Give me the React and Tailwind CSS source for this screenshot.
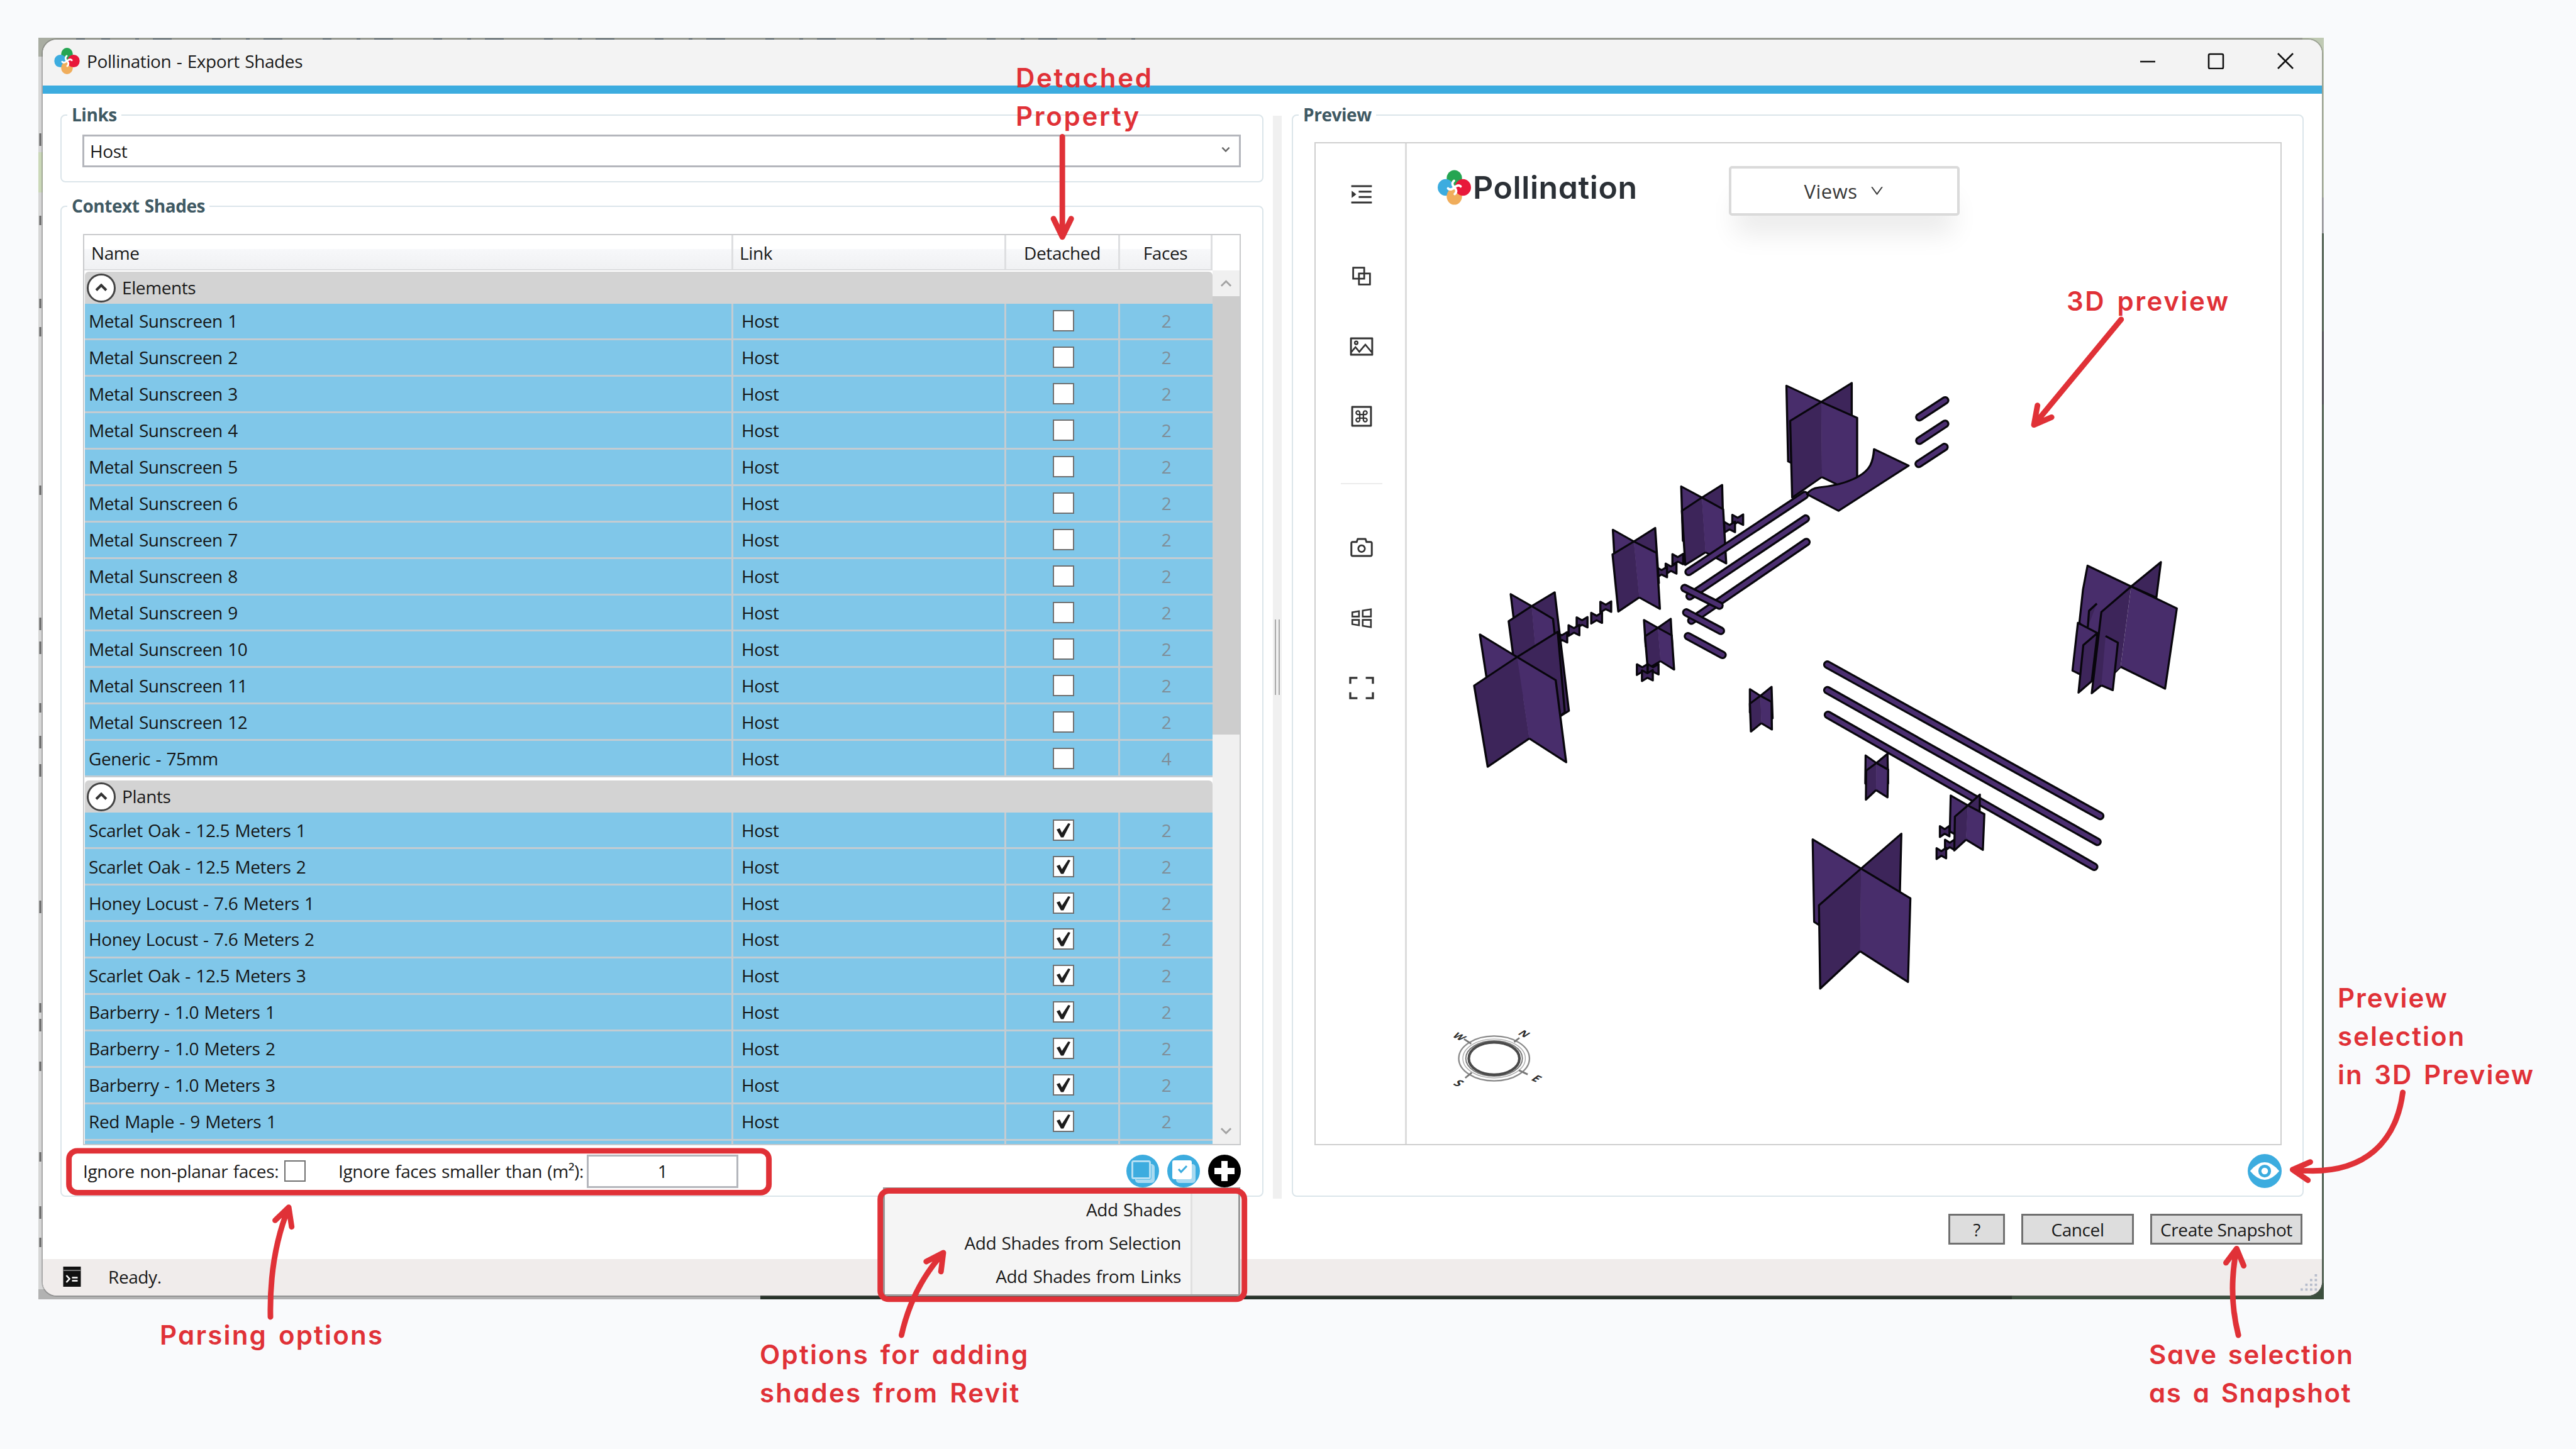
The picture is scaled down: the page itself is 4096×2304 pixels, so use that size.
import React from "react";
import {
  AiOutlineMenuUnfold,
  AiOutlineBlock,
  AiOutlinePicture,
  AiOutlineMacCommand,
  AiOutlineCamera,
  AiOutlineWindows,
  AiOutlineDown,
} from "react-icons/ai";

const elements = [
  ...Array.from({ length: 12 }, (_, i) => ({ name: `Metal Sunscreen ${i + 1}`, faces: 2 })),
  { name: "Generic - 75mm", faces: 4 },
];

const plants = [
  "Scarlet Oak - 12.5 Meters 1",
  "Scarlet Oak - 12.5 Meters 2",
  "Honey Locust - 7.6 Meters 1",
  "Honey Locust - 7.6 Meters 2",
  "Scarlet Oak - 12.5 Meters 3",
  "Barberry - 1.0 Meters 1",
  "Barberry - 1.0 Meters 2",
  "Barberry - 1.0 Meters 3",
  "Red Maple - 9 Meters 1",
].map((name) => ({ name, faces: 2, detached: true }));

function Chevron({ className, dir = "down", stroke = 2.4 }) {
  return (
    <svg viewBox="0 0 20 12" className={className} fill="none" stroke="currentColor" strokeWidth={stroke}>
      <path d={dir === "down" ? "M2 2 10 10 18 2" : "M2 10 10 2 18 10"} />
    </svg>
  );
}

function Logo({ className }) {
  return (
    <svg viewBox="0 0 100 104" className={className}>
      <ellipse cx="50" cy="25" rx="23" ry="25" fill="#25a552" />
      <ellipse cx="24" cy="52" rx="24" ry="25" fill="#3cacdf" />
      <ellipse cx="50" cy="79" rx="23" ry="25" fill="#f0ad5b" />
      <ellipse cx="76" cy="52" rx="24" ry="25" fill="#e8183a" />
      <path
        d="M50 52C43 45 42 38 49 32M50 52C58 45 64 44 69 49M50 52C57 59 58 66 51 72M50 52C42 59 36 60 31 55"
        fill="none"
        stroke="#fff"
        strokeWidth="7"
        strokeLinecap="round"
      />
    </svg>
  );
}

function GroupBox({ title, className, children }) {
  return (
    <section className={`relative rounded-[8px] border-2 border-[#dbe5ea] ${className}`}>
      <h2 className="absolute left-[9px] top-[-21px] bg-white px-[7px] text-[28px] font-bold leading-[38px] tracking-[-0.45px] text-[#3f5963]">
        {title}
      </h2>
      {children}
    </section>
  );
}

function CheckBox({ checked }) {
  return (
    <span className="flex h-[34px] w-[34px] shrink-0 items-center justify-center border-2 border-[#707070] bg-white">
      {checked && (
        <svg viewBox="0 0 30 30" className="h-[30px] w-[30px]">
          <path d="M4 14 9 12 12.5 19 22.5 4 26 5 15 26.5 11 26.5Z" fill="#1d1d1d" />
        </svg>
      )}
    </span>
  );
}

function GroupRow({ title }) {
  return (
    <div className="flex h-[51px] shrink-0 items-center rounded-t-[6px] bg-[#d3d3d3] pl-[3px]">
      <span className="flex h-[46px] w-[46px] items-center justify-center rounded-full border-[3px] border-[#444] bg-white text-[#333]">
        <Chevron dir="up" className="h-[13px] w-[20px]" stroke={4} />
      </span>
      <span className="pb-px pl-[10px]">{title}</span>
    </div>
  );
}

const columns = "grid grid-cols-[1031px_434px_181px_147px]";

function Row({ name, faces, detached }) {
  return (
    <div className={`${columns} h-[57.95px] shrink-0 border-b-[3px] border-[#c3ccd2] bg-[#80c7e9] text-[#161616]`}>
      <div className="flex items-center border-r-[3px] border-[#c3ccd2] pl-[6px]">{name}</div>
      <div className="flex items-center border-r-[3px] border-[#c3ccd2] pl-[13px]">Host</div>
      <div className="flex items-center justify-center border-r-[3px] border-[#c3ccd2] pl-[4px]">
        <CheckBox checked={detached} />
      </div>
      <div className="flex items-center justify-center text-[#7f8e98]">{faces}</div>
    </div>
  );
}

function HeaderCell({ className, children }) {
  return <div className={`flex items-center border-r-[3px] border-[#dedfe1] pt-[2px] ${className}`}>{children}</div>;
}

function ShadeTable() {
  return (
    <div className="flex h-[1449px] w-[1841px] flex-col border-2 border-[#c9cacc]">
      <div className="flex h-[56px] shrink-0">
        <div className="grid grid-cols-[1032px_434px_181px_147px] border-b-2 border-[#dcdddf] bg-linear-to-b from-white from-40% via-[#f7f8fa] via-41% to-[#f0f1f3]">
          <HeaderCell className="pl-[11px]">Name</HeaderCell>
          <HeaderCell className="pl-[10px]">Link</HeaderCell>
          <HeaderCell className="justify-center">Detached</HeaderCell>
          <HeaderCell className="justify-center">Faces</HeaderCell>
        </div>
      </div>
      <div className="flex min-h-0 grow">
        <div className="ml-px flex w-[1793px] flex-col overflow-hidden pt-[2px]">
          <GroupRow title="Elements" />
          {elements.map((e) => (
            <Row key={e.name} {...e} />
          ))}
          <div className="h-[5px] shrink-0" />
          <GroupRow title="Plants" />
          {plants.map((e) => (
            <Row key={e.name} {...e} />
          ))}
          <div className={`${columns} h-[10px] shrink-0 bg-[#80c7e9]`}>
            <div className="border-r-[3px] border-[#c3ccd2]" />
            <div className="border-r-[3px] border-[#c3ccd2]" />
            <div className="border-r-[3px] border-[#c3ccd2]" />
          </div>
        </div>
        <div className="flex w-[43px] flex-col items-center bg-[#f0f0f0] text-[#a3a3a3]">
          <div className="flex h-[41px] items-center justify-center">
            <Chevron dir="up" className="h-[12px] w-[19px]" stroke={3} />
          </div>
          <div className="h-[697px] w-full bg-[#cdcdcd]" />
          <Chevron className="mb-[15px] mt-auto h-[12px] w-[19px]" stroke={3} />
        </div>
      </div>
    </div>
  );
}

function RoundActions() {
  return (
    <div className="ml-auto flex gap-[13px]">
      <svg viewBox="0 0 52 52" className="h-[52px] w-[52px]">
        <circle cx="26" cy="26" r="26" fill="#3cacdf" />
        <rect x="14" y="15" width="31" height="30" rx="5" fill="#a8daf1" />
        <path d="M39 17V36Q39 39 36 39H16" fill="none" stroke="#3cacdf" strokeWidth="2" opacity=".7" />
        <rect x="9.500" y="10.500" width="28" height="27" rx="2" fill="#3cacdf" stroke="#b4dff3" strokeWidth="3" />
      </svg>
      <svg viewBox="0 0 52 52" className="h-[52px] w-[52px]">
        <circle cx="26" cy="26" r="26" fill="#3cacdf" />
        <rect x="14" y="15" width="31" height="30" rx="5" fill="#a8daf1" />
        <rect x="8" y="9" width="31" height="30" rx="3" fill="#fff" />
        <path d="M18 23 22 27.500 31 18" fill="none" stroke="#3cacdf" strokeWidth="3" />
      </svg>
      <svg viewBox="0 0 52 52" className="h-[52px] w-[52px]">
        <circle cx="26" cy="26" r="26" fill="#000" />
        <path d="M26 10V42M10 26H42" stroke="#fff" strokeWidth="10" />
      </svg>
    </div>
  );
}

function LeftPane() {
  return (
    <div className="ml-[28px] w-[1913px] pt-[33px]">
      <GroupBox title="Links" className="h-[108px]">
        <div className="ml-[33px] mt-[30px] flex h-[52px] w-[1842px] items-center justify-between border-[3px] border-[#b4b6bc] pl-[9px] pr-[14px]">
          <span>Host</span>
          <Chevron className="mb-[6px] h-[9px] w-[14px] text-[#666]" stroke={3.5} />
        </div>
      </GroupBox>
      <GroupBox title="Context Shades" className="mt-[37px] h-[1576px] pl-[34px] pt-[43px]">
        <ShadeTable />
        <div className="flex h-[82px] w-[1841px] items-center">
          <span className="w-[320px] whitespace-nowrap">Ignore non-planar faces:</span>
          <CheckBox />
          <span className="ml-[52px] w-[395px] whitespace-nowrap">Ignore faces smaller than (m²):</span>
          <div className="flex h-[53px] w-[241px] items-center justify-center border-[3px] border-[#b4b6bc]">1</div>
          <RoundActions />
        </div>
      </GroupBox>
    </div>
  );
}

const LIGHT = "#482d6b";
const DARK = "#3d255a";

/* Two vertical planes crossing at c; p = [tl, c, tr, fr, frBottom, fl, flBottom, cBottom, tlBottom, trBottom] */
function Cross({ p }) {
  const [tl, c, tr, fr, frb, fl, flb, cb, tlb, trb] = p.map((q) => q.join(" "));
  return (
    <g>
      <path d={`M${c}L${tl}L${tlb}L${cb}`} fill={LIGHT} />
      <path d={`M${c}L${tr}L${trb}L${cb}`} fill={DARK} />
      <path d={`M${c}L${fl}L${flb}L${cb}`} fill={DARK} />
      <path d={`M${c}L${fr}L${frb}L${cb}`} fill={LIGHT} />
    </g>
  );
}

function Shrub({ x, y }) {
  return (
    <path
      d={`M${x - 16} ${y - 18}L${x} ${y - 8}L${x + 16} ${y - 19}V${y + 16}L${x} ${y + 7}L${x - 16} ${y + 18}Z`}
      fill={DARK}
    />
  );
}

function Bar({ a, b }) {
  return (
    <g>
      <path d={`M${a.join(" ")}L${b.join(" ")}`} strokeLinecap="round" strokeWidth="13.500" vectorEffect="non-scaling-stroke" />
      <path d={`M${a.join(" ")}L${b.join(" ")}`} strokeLinecap="round" stroke="#4b2e70" strokeWidth="7" vectorEffect="non-scaling-stroke" />
    </g>
  );
}

const west = [
  [[286, 877], [348, 917], [416, 871], [411, 959], [440, 1250], [280, 967], [305, 1180], [380, 1320], [310, 1100], [458, 1265]],
  [[195, 1011], [305, 1086], [425, 1002], [419, 1163], [450, 1436], [178, 1181], [218, 1451], [341, 1357], [218, 1180], [446, 1270]],
  [[790, 519], [851, 556], [911, 514], [914, 595], [923, 775], [792, 600], [802, 780], [862, 738], [795, 700], [915, 690]],
  [[588, 663], [650, 702], [713, 657], [717, 740], [727, 926], [587, 745], [604, 935], [666, 888], [595, 800], [724, 840]],
  [[680, 963], [721, 989], [759, 959], [762, 1014], [769, 1128], [683, 1017], [691, 1125], [729, 1100], [685, 1050], [764, 1060]],
  [[993, 1193], [1024, 1215], [1057, 1185], [1057, 1235], [1058, 1327], [993, 1241], [996, 1334], [1027, 1306], [993, 1270], [1060, 1290]],
  [[1101, 184], [1204, 238], [1294, 175], [1310, 291], [1310, 545], [1112, 301], [1118, 556], [1206, 488], [1106, 436], [1294, 430]],
];
const westShrubs = [[957, 631], [933, 655], [780, 762], [760, 793], [732, 805], [567, 920], [540, 957], [497, 972], [473, 998], [437, 1022]];
const westBars = [
  [[1155, 548], [812, 803]],
  [[1158, 626], [815, 884]],
  [[1160, 704], [820, 965]],
  [[800, 857], [903, 915]],
  [[805, 938], [907, 999]],
  [[810, 1017], [912, 1079]],
  [[1494, 289], [1570, 233]],
  [[1494, 367], [1570, 311]],
  [[1492, 444], [1568, 388]],
];
const eastBars = [
  [[238, 445], [1145, 948]],
  [[238, 530], [1136, 1034]],
  [[240, 612], [1125, 1117]],
];
const east = [
  [[365, 747], [401, 772], [438, 741], [440, 794], [438, 886], [367, 797], [366, 894], [400, 862], [364, 840], [440, 840]],
  [[648, 880], [705, 913], [745, 877], [760, 942], [755, 1061], [662, 950], [660, 1063], [699, 1027], [645, 1000], [744, 960]],
  [[189, 1026], [350, 1123], [484, 1007], [514, 1222], [506, 1500], [210, 1245], [214, 1522], [347, 1398], [194, 1300], [478, 1250]],
];

function Compass() {
  return (
    <g fill="none" stroke="#555">
      <ellipse cx="2536" cy="1795" rx="60" ry="38" strokeWidth="2.500" stroke="#8a8a8a" />
      <ellipse cx="2536" cy="1795" rx="53" ry="33" strokeWidth="1.500" stroke="#aaa" />
      <ellipse cx="2536" cy="1795" rx="48" ry="30" strokeWidth="2" stroke="#777" />
      <ellipse cx="2536" cy="1795" rx="43" ry="27.500" strokeWidth="4.500" stroke="#4a4a4a" />
      <path d="M2497 1770 2485 1762M2570 1767 2579 1760M2498 1819 2487 1828M2578 1815 2593 1822" strokeWidth="3" stroke="#777" />
      <g
        fill="#2b2b2b"
        stroke="none"
        textAnchor="middle"
        className="font-['Open_Sans',sans-serif] text-[20px] font-bold tracking-normal"
      >
        <text transform="matrix(.8 .4 -.75 .5 2477 1758)" y="7">W</text>
        <text transform="matrix(.8 .4 -.75 .5 2587 1753)" y="7">N</text>
        <text transform="matrix(.9 .4 -.8 .6 2476 1837)" y="7">S</text>
        <text transform="matrix(.9 .4 -.8 .6 2608 1829)" y="7">E</text>
      </g>
    </g>
  );
}

function Scene() {
  return (
    <svg viewBox="2388 243 1482 1697" preserveAspectRatio="none" className="absolute inset-0 h-full w-full">
      <g stroke="#08060c" strokeLinejoin="round">
        <g transform="translate(2400 560) scale(.57398 .5102)" strokeWidth="6.300">
          {westShrubs.map(([x, y]) => (
            <Shrub key={`${x}-${y}`} x={x} y={y} />
          ))}
          {west.map((p, i) => (
            <Cross key={i} p={p} />
          ))}
          {[[675, 1128], [707, 1128], [690, 1148]].map(([x, y]) => (
            <Shrub key={x} x={x} y={y} />
          ))}
          <path d="M1160 528 1205 492 1240 515 1190 522Z" fill="#fff" stroke="none" />
          {westBars.map(([a, b], i) => (
            <Bar key={i} a={a} b={b} />
          ))}
          <path
            d="M1162 545Q1172 525 1198 522C1240 518 1280 508 1315 485C1348 463 1357 440 1360 395L1462 450 1255 600Z"
            fill={LIGHT}
          />
        </g>
        <g transform="translate(2980 900) scale(.5102)" strokeWidth="6.800">
          {eastBars.map(([a, b], i) => (
            <Bar key={i} a={a} b={b} />
          ))}
          <Shrub x={645} y={1045} />
          <Shrub x={628} y={1000} />
          <Shrub x={617} y={1073} />
          {east.map((p, i) => (
            <Cross key={i} p={p} />
          ))}
          <path d="M1248 185 1103 116 1088 195 1076 305 1140 400Z" fill={LIGHT} />
          <path d="M1248 185 1347 104 1332 222Z" fill={DARK} />
          <path d="M1248 185 1400 258 1361 525 1213 452Z" fill={LIGHT} stroke="none" />
          <path d="M1248 185 1400 258 1361 525 1213 452 1190 475" fill="none" />
          <path d="M1104 320 1108 266 1134 242" fill={DARK} />
          <path d="M1136 340 1071 306 1053 465 1080 478Z" fill={LIGHT} />
          <path d="M1136 340 1089 380 1073 538 1117 500Z" fill={DARK} />
          <path d="M1248 185 1149 270 1117 540 1149 514 1213 452Z" fill={DARK} stroke="none" />
          <path d="M1248 185 1149 270 1117 540 1149 514" fill="none" />
          <path d="M1163 350 1204 372 1187 530 1149 514Z" fill={LIGHT} stroke="none" />
          <path d="M1163 350 1204 372 1187 530 1149 514" fill="none" />
        </g>
      </g>
      <Compass />
    </svg>
  );
}

function ExpandCorners({ className }) {
  return (
    <svg viewBox="0 0 42 38" className={className} fill="none" stroke="currentColor" strokeWidth="3.500">
      <path d="M2 12V2H14M28 2H40V12M2 26V36H14M28 36H40V26" />
    </svg>
  );
}

function PreviewPane() {
  return (
    <GroupBox title="Preview" className="ml-[16px] mt-[33px] h-[1721px] w-[1609px] pl-[34px] pt-[42px]">
      <div className="flex h-[1595px] w-[1538px] border-2 border-[#cfcfcf]">
        <div className="flex w-[145px] shrink-0 flex-col items-center border-r-[3px] border-[#dcdcdc] pl-[3px] pt-[60px] text-[42px] text-[#333]">
          <AiOutlineMenuUnfold />
          <AiOutlineBlock className="mt-[88px]" />
          <AiOutlinePicture className="mt-[70px]" />
          <AiOutlineMacCommand className="mt-[69px]" />
          <div className="mt-[85px] h-[2px] w-[66px] bg-[#ececec]" />
          <AiOutlineCamera className="mt-[80px]" />
          <AiOutlineWindows className="mt-[70px]" />
          <ExpandCorners className="mt-[72px] h-[36px] w-[40px]" />
        </div>
        <div className="relative grow">
          <Scene />
          <div className="relative flex items-start">
            <div className="ml-[49px] mt-[42px] flex items-center">
              <Logo className="h-[56px] w-[53px]" />
              <span className="ml-[3px] font-['Inter',sans-serif] text-[50px] font-semibold leading-[56px] tracking-[0.6px] text-[#2b3036] [font-feature-settings:'cv11']">
                Pollination
              </span>
            </div>
            <div className="absolute left-[512px] top-[36px] flex h-[79px] w-[367px] items-center justify-center gap-[18px] rounded-[5px] border-[4px] border-[#dadada] bg-white text-[31px] tracking-[0.5px] text-[#383838] shadow-[0_40px_40px_-10px_rgba(0,0,0,0.08)]">
              Views
              <AiOutlineDown className="text-[25px]" />
            </div>
          </div>
        </div>
      </div>
      <div className="flex h-[82px] w-[1538px] items-center justify-end">
        <svg viewBox="0 0 56 56" className="h-[54px] w-[54px]">
          <circle cx="28" cy="28" r="28" fill="#3cacdf" />
          <path d="M4 28Q28-1 52 28Q28 57 4 28Z" fill="#fff" />
          <circle cx="28" cy="28" r="8" fill="#fff" stroke="#3cacdf" strokeWidth="5" />
        </svg>
      </div>
    </GroupBox>
  );
}

function Splitter() {
  return (
    <div className="ml-[15px] mt-[35px] flex h-[1722px] w-[14px] items-center justify-center gap-[4px] bg-[#f0f0f0]">
      <div className="h-[120px] w-[2px] bg-[#aaa]" />
      <div className="h-[120px] w-[2px] bg-[#aaa]" />
    </div>
  );
}

function TitleBar() {
  return (
    <header className="flex h-[73px] shrink-0 items-center bg-[#f3f3f3] pl-[18px] pr-[44px]">
      <Logo className="mb-[5px] h-[42px] w-[41px]" />
      <h1 className="mb-[5px] ml-[11px]">Pollination - Export Shades</h1>
      <svg viewBox="0 0 246 26" className="mb-[6px] ml-auto h-[26px] w-[246px]" fill="none" stroke="#111" strokeWidth="2.600">
        <path d="M1 14H25M220 1 244 25M244 1 220 25" />
        <rect x="110" y="2" width="23" height="23" rx="2" />
      </svg>
    </header>
  );
}

const buttonStyle = "flex h-[49px] items-center justify-center border-[3px] border-[#707070] bg-[#dddddd]";

function Footer() {
  return (
    <>
      <div className="flex h-[96px] shrink-0 items-start justify-end gap-[26px] pr-[31px] pt-[24px]">
        <button className={`${buttonStyle} w-[90px]`}>?</button>
        <button className={`${buttonStyle} w-[179px]`}>Cancel</button>
        <button className={`${buttonStyle} w-[242px] whitespace-nowrap`}>Create Snapshot</button>
      </div>
      <div className="flex grow items-center bg-[#f0eceb] pl-[32px]">
        <svg viewBox="0 0 28 32" className="mb-[2px] h-[32px] w-[29px]">
          <path d="M0 0H28V32H0Z" fill="#111" />
          <path d="M0 6H28" stroke="#777" strokeWidth="2" />
          <path d="M5 14 10 19.500 5 25M14 17.500H23M14 22.500H23" fill="none" stroke="#fff" strokeWidth="2.600" />
        </svg>
        <span className="mb-[2px] ml-[43px]">Ready.</span>
        <svg viewBox="0 0 32 32" className="ml-auto mr-[4px] mt-[16px] h-[30px] w-[30px]" fill="#b6bccb">
          <path d="M24 2h4v4h-4zM24 10h4v4h-4zM24 18h4v4h-4zM24 26h4v4h-4zM16 10h4v4h-4zM16 18h4v4h-4zM16 26h4v4h-4zM8 18h4v4h-4zM8 26h4v4h-4zM0 26h4v4h-4z" />
        </svg>
      </div>
    </>
  );
}

function AddMenu() {
  return (
    <div className="absolute left-[1404px] top-[1888px] flex h-[173px] w-[568px] border-[3px] border-[#999] bg-[#f5f5f5]">
      <ul className="flex grow flex-col items-end pr-[15px] pt-[6px] leading-[53px]">
        <li>Add Shades</li>
        <li>Add Shades from Selection</li>
        <li>Add Shades from Links</li>
      </ul>
      <div className="w-[76px] border-l-[3px] border-[#e0e0e0] bg-[#f0f0f0]" />
    </div>
  );
}

function Backdrop() {
  return (
    <svg viewBox="0 0 3634 2006" className="absolute inset-0 h-full w-full">
      <rect width="3634" height="2006" fill="#d6d6d6" />
      <rect width="3634" height="30" fill="#a9ada2" />
      <rect x="3600" width="34" height="254" fill="#c0cab4" />
      <rect x="3600" y="254" width="34" height="57" fill="#b4b4b8" />
      <rect x="3600" y="311" width="34" height="156" fill="#4c604e" />
      <rect x="3600" y="467" width="34" height="116" fill="#4b4b52" />
      <rect x="3600" y="583" width="34" height="1423" fill="#4c604e" />
      <rect y="1990" width="1148" height="16" fill="#b2b2b2" />
      <rect x="1148" y="1980" width="1990" height="26" fill="#28332a" />
      <rect x="3138" y="1980" width="496" height="26" fill="#3c4f3e" />
      <path
        d="M3 152V172M3 283V298M3 415V430M3 460V475M3 712V727M3 922V942M3 960V980M3 1058V1073M3 1110V1130M3 1155V1175M3 1372V1392M3 1535V1550M3 1560V1580M3 1628V1643M3 1772V1787M3 1858V1878M3 1908V1923"
        stroke="#666"
        strokeWidth="3"
      />
      <rect y="182" width="8" height="64" fill="#cbd8b8" />
      <path d="M60 2H76M100 2H1750" stroke="#60717e" strokeWidth="2" strokeDasharray="14 40 6 22 30 64" />
    </svg>
  );
}

function Note({ className, lines }) {
  return (
    <p
      className={`absolute whitespace-nowrap font-['Inter',sans-serif] text-[42px] font-semibold leading-[61px] text-[#e03137] [font-feature-settings:'cv11'] ${className}`}
    >
      {lines.map((l) => (
        <span key={l} className="block">
          {l}
        </span>
      ))}
    </p>
  );
}

function Annotations() {
  return (
    <>
      <svg
        viewBox="0 0 4372 2459"
        className="absolute inset-0 h-full w-full"
        fill="none"
        stroke="#e03137"
        strokeWidth="9.500"
        strokeLinecap="round"
        strokeLinejoin="round"
      >
        <path d="M1803 232V402M1788 371 1803 402 1818 371" />
        <path d="M3600 542 3452 721M3458 688 3452 721 3482 708" />
        <path d="M459 2235Q457 2130 490 2049M467 2071 490 2049 495 2082" />
        <path d="M1530 2266Q1548 2185 1601 2126M1572 2141 1601 2126 1597 2158" />
        <path d="M4078 1854C4068 1930 4020 2000 3891 1985M3921 1972 3891 1985 3917 2003" />
        <path d="M3799 2266Q3781 2195 3796 2119M3778 2143 3796 2119 3808 2148" />
        <rect x="117" y="1953" width="1188" height="71" rx="14" />
        <rect x="1494" y="2021" width="618" height="184" rx="14" />
      </svg>
      <Note className="left-[1615px] top-[93px] tracking-[2.7px]" lines={["Detached", "Property"]} />
      <Note className="left-[3286px] top-[448px] tracking-[2.6px] [word-spacing:5px]" lines={["3D preview"]} />
      <Note className="left-[254px] top-[2092px] tracking-[2.2px] [word-spacing:5px]" lines={["Parsing options"]} />
      <Note
        className="left-[1208px] top-[2123px] tracking-[2.2px] [word-spacing:5px]"
        lines={["Options for adding", "shades from Revit"]}
      />
      <Note
        className="left-[3717px] top-[1556px] tracking-[2px] [word-spacing:5px]"
        lines={["Preview", "selection", "in 3D Preview"]}
      />
      <Note
        className="left-[3417px] top-[2123px] tracking-[1.6px] [word-spacing:5px]"
        lines={["Save selection", "as a Snapshot"]}
      />
    </>
  );
}

export default function App() {
  return (
    <div className="relative h-[2304px] w-[4096px] overflow-hidden bg-[#f9fafc] pl-[61px] pt-[60px] font-['Open_Sans','Noto_Sans',sans-serif] text-[28px] leading-[40px] tracking-[-0.4px] text-[#1a1a1a] [word-spacing:1.5px]">
      <div className="relative h-[2006px] w-[3634px] pl-[7px] pt-[3px]">
        <Backdrop />
        <main className="relative flex h-[1997px] w-[3624px] flex-col overflow-hidden rounded-[22px] bg-white shadow-[0_0_0_2px_rgba(90,90,90,0.35)]">
          <TitleBar />
          <div className="h-[13px] shrink-0 bg-[#3cacdf]" />
          <div className="flex h-[1757px] shrink-0">
            <LeftPane />
            <Splitter />
            <PreviewPane />
          </div>
          <Footer />
        </main>
      </div>
      <AddMenu />
      <Annotations />
    </div>
  );
}
